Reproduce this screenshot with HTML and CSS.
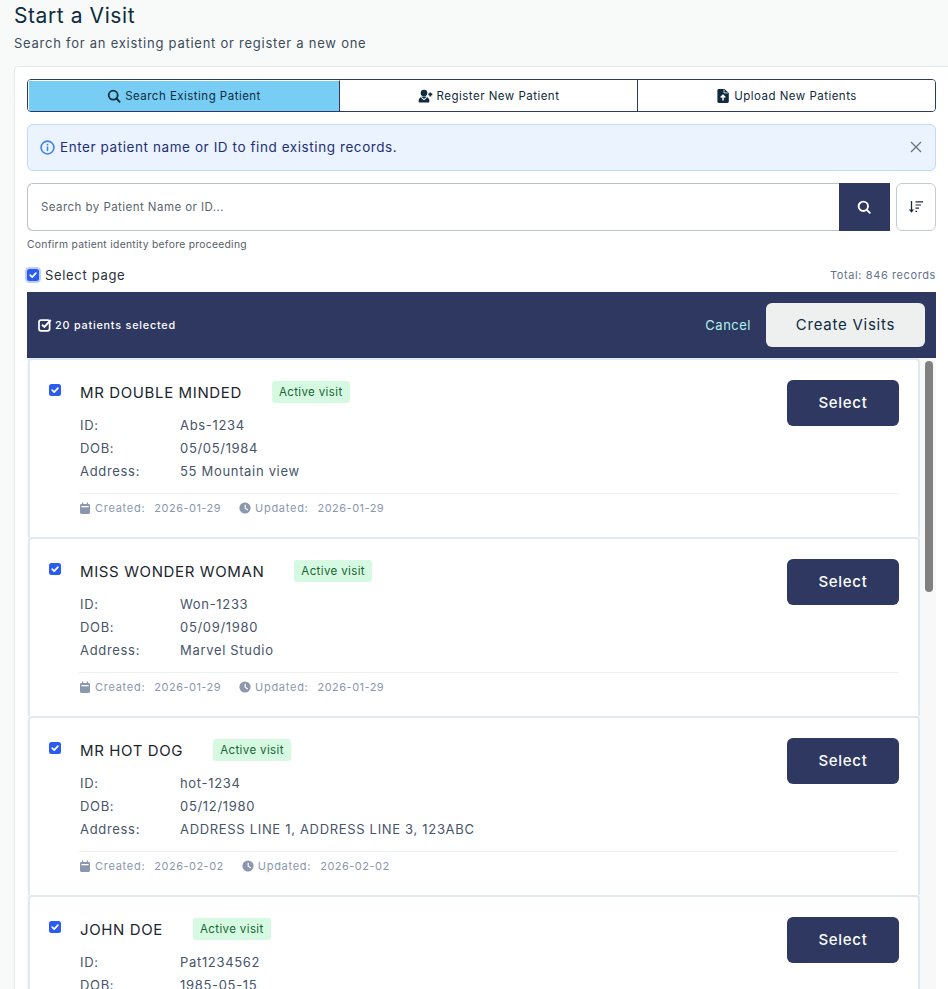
FILE: index.html
```html
<!DOCTYPE html>
<html lang="en">
<head>
<meta charset="utf-8">
<title>Start a Visit</title>
<link rel="stylesheet" href="styles.css">
</head>
<body>
<svg class="defs" width="0" height="0" aria-hidden="true">
  <defs>
    <symbol id="check" viewBox="0 0 12 12"><path d="M3.200 6.200 5.200 8.100 8.900 4.200" fill="none" stroke="#fff" stroke-width="1.700" stroke-linecap="round" stroke-linejoin="round"/></symbol>
    <symbol id="cal" viewBox="0 0 12 12"><path d="M3 .5h1.200V2h3.600V.5H9V2h.6A1.400 1.400 0 0 1 11 3.400v7.200A1.400 1.400 0 0 1 9.600 12H2.400A1.400 1.400 0 0 1 1 10.600V3.400A1.400 1.400 0 0 1 2.400 2H3z" fill="#8a97ae"/><rect x="2.400" y="4" width="7.200" height="1.300" fill="#fff"/></symbol>
    <symbol id="clock" viewBox="0 0 12 12"><circle cx="6" cy="6" r="5.600" fill="#8a97ae"/><path d="M6.200 2.800V6.300L8.800 8" fill="none" stroke="#fff" stroke-width="1.200"/></symbol>
  </defs>
</svg>
<main class="page">
  <h1 class="title">Start a Visit</h1>
  <p class="subtitle">Search for an existing patient or register a new one</p>
  <section class="panel">
    <div class="tabs">
      <button class="tab tab-first tab-active">
        <svg class="tab-icon" viewBox="0 0 14 14"><circle cx="6.200" cy="6.200" r="4.500" fill="none" stroke="#0f2b3d" stroke-width="1.800"/><path d="M9.500 9.500 12.600 12.800" stroke="#0f2b3d" stroke-width="1.900" stroke-linecap="round"/></svg>
        Search Existing Patient
      </button>
      <button class="tab tab-second">
        <svg class="tab-icon tab-icon-wide" viewBox="0 0 15 14"><circle cx="6" cy="4" r="3.300" fill="#0f2b3d"/><path d="M.6 12.600c0-3.200 2-5 5.400-5s5.400 1.800 5.400 5c0 .6-.4.9-1 .9H1.600c-.6 0-1-.3-1-.9z" fill="#0f2b3d"/><path d="M3.300 8.400 6 10.600 8.700 8.400" fill="none" stroke="#fff" stroke-width="1.100"/><path d="M12.300 3.400v4M10.300 5.400h4" stroke="#0f2b3d" stroke-width="1.800"/></svg>
        Register New Patient
      </button>
      <button class="tab tab-third">
        <svg class="tab-icon" viewBox="0 0 14 14"><path d="M2.800 0h5.700L12.800 3.900v8.700c0 .8-.6 1.400-1.400 1.400H2.800c-.8 0-1.400-.6-1.400-1.400V1.400C1.400.6 2 0 2.800 0z" fill="#0f2b3d"/><path d="M8 .6v3.300h3.800" fill="none" stroke="#fff" stroke-width=".8"/><path d="M7 6.400v5M4.700 8.500 7 6.200 9.300 8.500" fill="none" stroke="#fff" stroke-width="1.500"/></svg>
        Upload New Patients
      </button>
    </div>

    <div class="alert">
      <svg class="alert-icon" viewBox="0 0 14 14"><circle cx="7" cy="7" r="6" fill="none" stroke="#3b82f6" stroke-width="1.500"/><rect x="6.300" y="6" width="1.400" height="4.300" fill="#3b82f6"/><rect x="6.300" y="3.600" width="1.400" height="1.500" fill="#3b82f6"/></svg>
      <span class="alert-text">Enter patient name or ID to find existing records.</span>
      <svg class="alert-close" viewBox="0 0 12 12"><path d="M1 1 11 11M11 1 1 11" stroke="#6b7280" stroke-width="1.300"/></svg>
    </div>

    <div class="search-row">
      <div class="search-box">
        <span class="search-placeholder">Search by Patient Name or ID...</span>
        <span class="search-btn"><svg class="search-btn-icon" viewBox="0 0 14 14"><circle cx="6.300" cy="6.300" r="4.700" fill="none" stroke="#fff" stroke-width="1.900"/><path d="M9.800 9.800 12.800 12.800" stroke="#fff" stroke-width="1.900" stroke-linecap="round"/></svg></span>
      </div>
      <span class="sort-btn"><svg class="sort-icon" viewBox="0 0 16 14"><path d="M3.500 1v10" stroke="#1f2937" stroke-width="1.300"/><path d="M.9 9.500h5.200L3.500 12.800z" fill="#1f2937"/><path d="M7.500 1.800h7.500M7.500 5h5.500M7.500 8.200h3.500M7.500 11.400h1.500" stroke="#1f2937" stroke-width="1.200"/></svg></span>
    </div>
    <p class="hint">Confirm patient identity before proceeding</p>

    <div class="select-row">
      <span class="check check-focus"><svg class="check-mark" viewBox="0 0 12 12"><use href="#check"/></svg></span>
      <span class="select-label">Select page</span>
      <span class="total">Total: 846 records</span>
    </div>

    <div class="bulk-bar">
      <svg class="bulk-icon" viewBox="0 0 14 14"><rect x="1" y="2.200" width="10.600" height="10.600" rx="2" fill="none" stroke="#fff" stroke-width="1.700"/><path d="M4 6.800 6.400 9 12.800 2" fill="none" stroke="#fff" stroke-width="1.900"/></svg>
      <span class="bulk-count">20 patients selected</span>
      <span class="bulk-cancel">Cancel</span>
      <button class="bulk-create">Create Visits</button>
    </div>

    <div class="list">
      <div class="scroll-thumb"></div>
      <div class="cards">
        <article class="card">
          <div class="card-main">
            <span class="check check-card"><svg class="check-mark" viewBox="0 0 12 12"><use href="#check"/></svg></span>
            <div class="card-body">
              <div class="name-row"><h2 class="name">MR DOUBLE MINDED</h2><span class="badge">Active visit</span></div>
              <dl class="fields">
                <dt>ID:</dt><dd>Abs-1234</dd>
                <dt>DOB:</dt><dd>05/05/1984</dd>
                <dt>Address:</dt><dd>55 Mountain view</dd>
              </dl>
            </div>
            <button class="select-btn">Select</button>
          </div>
          <div class="meta">
            <svg class="meta-icon"><use href="#cal"/></svg><span class="meta-label">Created:</span><span class="meta-date">2026-01-29</span>
            <svg class="meta-icon meta-icon-gap"><use href="#clock"/></svg><span class="meta-label">Updated:</span><span class="meta-date">2026-01-29</span>
          </div>
        </article>
        <article class="card">
          <div class="card-main">
            <span class="check check-card"><svg class="check-mark" viewBox="0 0 12 12"><use href="#check"/></svg></span>
            <div class="card-body">
              <div class="name-row"><h2 class="name">MISS WONDER WOMAN</h2><span class="badge">Active visit</span></div>
              <dl class="fields">
                <dt>ID:</dt><dd>Won-1233</dd>
                <dt>DOB:</dt><dd>05/09/1980</dd>
                <dt>Address:</dt><dd>Marvel Studio</dd>
              </dl>
            </div>
            <button class="select-btn">Select</button>
          </div>
          <div class="meta">
            <svg class="meta-icon"><use href="#cal"/></svg><span class="meta-label">Created:</span><span class="meta-date">2026-01-29</span>
            <svg class="meta-icon meta-icon-gap"><use href="#clock"/></svg><span class="meta-label">Updated:</span><span class="meta-date">2026-01-29</span>
          </div>
        </article>
        <article class="card">
          <div class="card-main">
            <span class="check check-card"><svg class="check-mark" viewBox="0 0 12 12"><use href="#check"/></svg></span>
            <div class="card-body">
              <div class="name-row"><h2 class="name">MR HOT DOG</h2><span class="badge">Active visit</span></div>
              <dl class="fields">
                <dt>ID:</dt><dd>hot-1234</dd>
                <dt>DOB:</dt><dd>05/12/1980</dd>
                <dt>Address:</dt><dd>ADDRESS LINE 1, ADDRESS LINE 3, 123ABC</dd>
              </dl>
            </div>
            <button class="select-btn">Select</button>
          </div>
          <div class="meta">
            <svg class="meta-icon"><use href="#cal"/></svg><span class="meta-label">Created:</span><span class="meta-date">2026-02-02</span>
            <svg class="meta-icon meta-icon-gap"><use href="#clock"/></svg><span class="meta-label">Updated:</span><span class="meta-date">2026-02-02</span>
          </div>
        </article>
        <article class="card">
          <div class="card-main">
            <span class="check check-card"><svg class="check-mark" viewBox="0 0 12 12"><use href="#check"/></svg></span>
            <div class="card-body">
              <div class="name-row"><h2 class="name">JOHN DOE</h2><span class="badge">Active visit</span></div>
              <dl class="fields">
                <dt>ID:</dt><dd>Pat1234562</dd>
                <dt>DOB:</dt><dd>1985-05-15</dd>
              </dl>
            </div>
            <button class="select-btn">Select</button>
          </div>
        </article>
      </div>
    </div>
  </section>
</main>
</body>
</html>
```

FILE: styles.css
```css
* { box-sizing: border-box; }
html, body { margin: 0; height: 989px; overflow: hidden; }
body {
  background: #f8fafa;
  font-family: Inter, "Open Sans", "Liberation Sans", sans-serif;
  color: #0f2b3d;
}
.defs { position: absolute; }
.page { padding: 0 0 0 14px; }
.title {
  margin: 0;
  padding-top: 3px;
  font-size: 21px;
  line-height: 25px;
  font-weight: 400;
  letter-spacing: 0.58px;
  color: #0f2b3d;
}
.subtitle {
  margin: 7px 0 0;
  font-size: 13px;
  line-height: 17px;
  letter-spacing: 0.75px;
  color: #3c4c58;
}
.panel {
  margin-top: 14px;
  padding: 12px 12px 0;
  height: 940px;
  width: 940px;
  background: #fff;
  border: 1px solid #e5e8e9;
  border-radius: 4px 0 0 0;
}
.tabs {
  display: flex;
  width: 909px;
  height: 33px;
  border: 1px solid #2e3860;
  border-radius: 4px;
  overflow: hidden;
}
.tab {
  display: flex;
  align-items: center;
  justify-content: center;
  gap: 4px;
  border: 0;
  background: #fff;
  padding: 0;
  font: inherit;
  font-size: 11.500px;
  letter-spacing: 0.48px;
  color: #0f2b3d;
}
.tab-first { width: 312px; border-right: 1px solid #2e3860; }
.tab-second { width: 298px; border-right: 1px solid #2e3860; }
.tab-third { flex: 1; }
.tab-active { background: #78cdf5; border-left: 1px solid #fff; border-top: 1px solid #fff; }
.tab-icon { width: 14px; height: 14px; }
.tab-icon-wide { width: 15px; }
.alert {
  display: flex;
  align-items: center;
  width: 909px;
  height: 47px;
  margin-top: 12px;
  padding: 0 12px 1px;
  background: #ebf3fe;
  border: 1px solid #bfdbfe;
  border-radius: 6px;
}
.alert-icon { width: 15px; height: 15px; margin-right: 5px; }
.alert-text {
  flex: 1;
  font-size: 13.500px;
  letter-spacing: 0.58px;
  color: #1e2f78;
}
.alert-close { width: 12px; height: 12px; margin-right: 1px; }
.search-row { display: flex; width: 909px; height: 48px; margin-top: 12px; gap: 6px; }
.search-box {
  display: flex;
  align-items: center;
  justify-content: space-between;
  width: 863px;
  padding-left: 13px;
  border: 1px solid #b8c2c8;
  border-right: 0;
  border-radius: 6px 0 0 6px;
  background: #fff;
}
.search-placeholder { padding-bottom: 1px; font-size: 11.500px; letter-spacing: 0.45px; color: #5c6670; }
.search-btn {
  display: flex;
  align-items: center;
  justify-content: center;
  width: 51px;
  height: 48px;
  margin: -1px 0;
  padding-right: 2px;
  background: #2e3860;
}
.search-btn-icon { width: 14px; height: 14px; }
.sort-btn {
  display: flex;
  align-items: center;
  justify-content: center;
  width: 40px;
  border: 1px solid #c3ccd1;
  border-radius: 6px;
  background: #fff;
}
.sort-icon { width: 16px; height: 14px; }
.hint {
  margin: 6px 0 0;
  font-size: 10.300px;
  line-height: 15px;
  letter-spacing: 0.3px;
  color: #55606a;
}
.select-row {
  display: flex;
  align-items: center;
  width: 909px;
  height: 20px;
  margin-top: 13px;
}
.check {
  display: flex;
  align-items: center;
  justify-content: center;
  width: 12px;
  height: 12px;
  background: #2b5cf0;
  border-radius: 2.500px;
}
.check-focus { box-shadow: 0 0 0 2px #bfcdfb; }
.check-mark { width: 12px; height: 12px; }
.select-label {
  flex: 1;
  margin-left: 6px;
  font-size: 13px;
  letter-spacing: 0.67px;
  color: #2a3038;
}
.total { font-size: 11px; letter-spacing: 0.6px; color: #64748b; }
.bulk-bar {
  display: flex;
  align-items: center;
  width: 909px;
  height: 66px;
  margin-top: 7px;
  padding: 0 11px;
  background: #2e3860;
}
.bulk-icon { width: 14px; height: 14px; margin-right: 3px; }
.bulk-count {
  flex: 1;
  font-size: 10.800px;
  font-weight: 500;
  letter-spacing: 0.8px;
  color: #fff;
}
.bulk-cancel {
  margin-right: 15px;
  padding-bottom: 1px;
  font-size: 13px;
  letter-spacing: 0.5px;
  color: #b0f5ee;
}
.bulk-create {
  width: 159px;
  height: 44px;
  border: 0;
  border-radius: 6px;
  padding: 0 0 2px;
  background: #eef0f0;
  font: inherit;
  font-size: 15px;
  letter-spacing: 0.75px;
  color: #0f2b3d;
}
.list {
  position: relative;
  width: 909px;
  height: 631px;
  background: #f8f8f8;
  padding-left: 1px;
  overflow: hidden;
}
.scroll-thumb {
  position: absolute;
  top: 3px;
  left: 898px;
  width: 8px;
  height: 231px;
  border-radius: 4px;
  background: #808080;
}
.cards { width: 892px; }
.card {
  height: 179px;
  padding: 20px 19px 0;
  background: #fff;
  border: 2px solid #e2e8f0;
  border-bottom: 0;
  border-radius: 4px 4px 0 0;
}
.card-main { display: flex; align-items: flex-start; height: 113px; }
.check-card { margin: 4px 19px 0 0; flex: none; }
.card-body { flex: 1; }
.name-row { display: flex; align-items: center; gap: 30px; height: 22px; margin-top: 1px; }
.name {
  margin: 0;
  font-size: 15px;
  font-weight: 400;
  letter-spacing: 0.62px;
  color: #21262e;
}
.badge {
  display: flex;
  align-items: center;
  height: 22px;
  padding: 0 7px;
  border-radius: 3px;
  background: #d6f9e2;
  font-size: 11.500px;
  letter-spacing: 0.38px;
  color: #166534;
}
.fields {
  display: grid;
  grid-template-columns: 100px 1fr;
  grid-auto-rows: 23px;
  margin: 10px 0 0;
  align-items: center;
  font-size: 13px;
  letter-spacing: 0.68px;
  color: #475569;
}
.fields dt, .fields dd { margin: 0; }
.select-btn {
  width: 112px;
  height: 46px;
  border: 0;
  border-radius: 6px;
  padding: 0 0 2px;
  background: #2e3860;
  font: inherit;
  font-size: 15px;
  font-weight: 500;
  letter-spacing: 0.7px;
  color: #fff;
}
.meta {
  display: flex;
  align-items: center;
  height: 29px;
  margin-left: 30px;
  border-top: 1px solid #eef0f2;
  font-size: 11px;
  letter-spacing: 0.48px;
  color: #8a97ae;
}
.meta-icon { width: 12px; height: 12px; margin-right: 4px; }
.meta-icon-gap { margin-left: 18px; }
.meta-label { margin-right: 9px; letter-spacing: 0.73px; }
```
